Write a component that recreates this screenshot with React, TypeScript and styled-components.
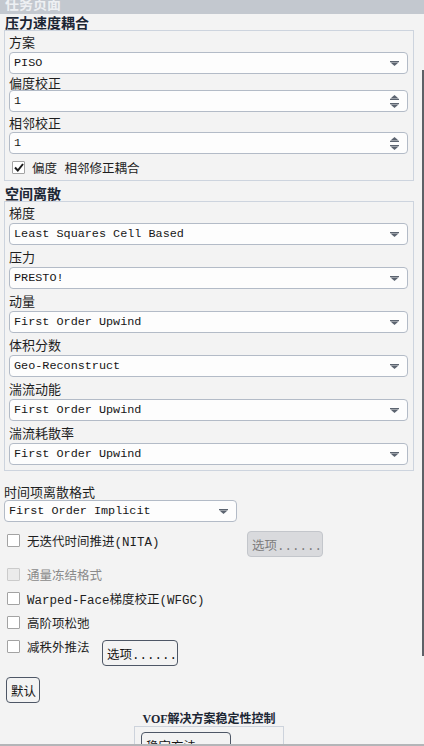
import React from 'react';
import styled, { createGlobalStyle } from 'styled-components';

const GlobalStyle = createGlobalStyle`
  html, body {
    margin: 0;
    padding: 0;
    background: #f3f3f3;
  }
  body {
    font-family: "Liberation Mono", "Noto Sans CJK SC", monospace;
    color: #1b1b1b;
  }
`;

const Panel = styled.div`
  width: 424px;
  height: 746px;
  display: flex;
  flex-direction: column;
  background: #f3f3f3;
  overflow: hidden;
`;

const TitleBar = styled.div`
  height: 14px;
  flex: none;
  background: #c3c8cf;
  overflow: hidden;
  padding-left: 5px;
`;

const TitleText = styled.div`
  margin-top: -7px;
  font-family: "Noto Sans CJK SC", sans-serif;
  font-weight: 700;
  font-size: 14px;
  line-height: 20px;
  color: #eef0f3;
`;

const Body = styled.div`
  flex: 1;
  min-height: 0;
  display: flex;
`;

const Content = styled.div`
  flex: 1;
  min-width: 0;
  padding-left: 4px;
  display: flex;
  flex-direction: column;
  overflow: hidden;

  & > * {
    flex-shrink: 0;
  }
`;

const Track = styled.div`
  width: 10px;
  flex: none;
  display: flex;
  flex-direction: column;
  align-items: flex-end;
`;

const Thumb = styled.div`
  width: 2px;
  margin-top: 56px;
  height: 586px;
  background: #5d6167;
`;

const BottomEdge = styled.div`
  height: 2px;
  flex: none;
  background: #b3b5b8;
`;

const SectionTitle = styled.div<{ $h: number }>`
  height: ${(p) => p.$h}px;
  display: flex;
  align-items: flex-end;
  padding-left: 1px;
  font-family: "Noto Sans CJK SC", sans-serif;
  font-weight: 700;
  font-size: 14px;
  line-height: 16px;
  color: #1c2634;
`;

const Group = styled.div<{ $pb?: number }>`
  border: 1px solid #cdd4de;
  padding: 0 5px ${(p) => p.$pb ?? 0}px 4px;
  display: flex;
  flex-direction: column;

  & > * {
    flex-shrink: 0;
  }
`;

const Label = styled.div<{ $h: number; $end?: boolean }>`
  height: ${(p) => p.$h}px;
  display: flex;
  align-items: ${(p) => (p.$end ? 'flex-end' : 'center')};
  padding-bottom: ${(p) => (p.$end ? 1 : 0)}px;
  box-sizing: border-box;
  font-family: "Noto Sans CJK SC", sans-serif;
  font-size: 13px;
  line-height: 15px;
  color: #1e1e1e;
`;

const Field = styled.div<{ $w?: number }>`
  height: 22px;
  box-sizing: border-box;
  width: ${(p) => (p.$w ? `${p.$w}px` : '100%')};
  border: 1px solid #b3bbc7;
  border-radius: 4px;
  background: #fdfdfd;
  display: flex;
  align-items: center;
  justify-content: space-between;
  padding: 0 8px 0 4px;
  font-family: "Liberation Mono", monospace;
  font-size: 11.8px;
  color: #161616;
`;

const ArrowBox = styled.div`
  display: flex;
  flex-direction: column;
  align-items: center;
  gap: 3px;
`;

const DropArrow = () => (
  <svg width="9" height="5" viewBox="0 0 9 5">
    <rect x="0" y="0" width="9" height="1.2" fill="#5c6470" />
    <polygon points="0.5,1.6 8.5,1.6 4.5,5" fill="#5c6470" />
  </svg>
);

const SpinArrows = () => (
  <ArrowBox>
    <svg width="9" height="5" viewBox="0 0 9 5">
      <polygon points="4.5,0 8.5,3.4 0.5,3.4" fill="#5c6470" />
      <rect x="0" y="3.8" width="9" height="1.2" fill="#5c6470" />
    </svg>
    <svg width="9" height="5" viewBox="0 0 9 5">
      <rect x="0" y="0" width="9" height="1.2" fill="#5c6470" />
      <polygon points="0.5,1.6 8.5,1.6 4.5,5" fill="#5c6470" />
    </svg>
  </ArrowBox>
);

const Select: React.FC<{ value: string; w?: number }> = ({ value, w }) => (
  <Field $w={w}>
    <span>{value}</span>
    <DropArrow />
  </Field>
);

const Spinner: React.FC<{ value: string }> = ({ value }) => (
  <Field>
    <span>{value}</span>
    <SpinArrows />
  </Field>
);

const Row = styled.div<{ $mt?: number }>`
  display: flex;
  align-items: flex-start;
  margin-top: ${(p) => p.$mt ?? 0}px;
`;

const CheckLabel = styled.div<{ $h: number; $w?: number; $disabled?: boolean }>`
  height: ${(p) => p.$h}px;
  width: ${(p) => (p.$w ? `${p.$w}px` : 'auto')};
  flex: none;
  display: flex;
  align-items: center;
  gap: 7px;
  padding-left: 3px;
  box-sizing: border-box;
  font-family: "Liberation Mono", "Noto Sans CJK SC", monospace;
  font-size: 12.5px;
  color: ${(p) => (p.$disabled ? '#8a8a8a' : '#1e1e1e')};
`;

const Box = styled.span<{ $disabled?: boolean }>`
  width: 13px;
  height: 13px;
  box-sizing: border-box;
  flex: none;
  border: 1px solid ${(p) => (p.$disabled ? '#cbcbcb' : '#a3a3a3')};
  background: ${(p) => (p.$disabled ? '#ebebeb' : '#ffffff')};
  border-radius: 1px;
  display: flex;
  align-items: center;
  justify-content: center;
`;

const Check: React.FC<{
  label: string;
  h?: number;
  w?: number;
  checked?: boolean;
  disabled?: boolean;
}> = ({ label, h = 24, w, checked, disabled }) => (
  <CheckLabel $h={h} $w={w} $disabled={disabled}>
    <Box $disabled={disabled}>
      {checked && (
        <svg width="10" height="9" viewBox="0 0 10 9">
          <path d="M1 4.5 L3.8 7.5 L9 1" fill="none" stroke="#1a1a1a" strokeWidth="2" />
        </svg>
      )}
    </Box>
    <span>{label}</span>
  </CheckLabel>
);

const Button = styled.div<{ $w: number; $disabled?: boolean; $mt?: number; $ml?: number }>`
  width: ${(p) => p.$w}px;
  height: 26px;
  box-sizing: border-box;
  flex: none;
  margin-top: ${(p) => p.$mt ?? 0}px;
  margin-left: ${(p) => p.$ml ?? 0}px;
  border: 1px solid ${(p) => (p.$disabled ? '#c3c6cb' : '#4e5766')};
  border-radius: 4px;
  background: ${(p) => (p.$disabled ? '#d9dadd' : 'transparent')};
  color: ${(p) => (p.$disabled ? '#7d7d7d' : '#151515')};
  display: flex;
  align-items: center;
  padding-left: 4px;
  font-family: "Liberation Mono", "Noto Sans CJK SC", monospace;
  font-size: 12.5px;
  white-space: nowrap;
  overflow: hidden;
`;

const VofBlock = styled.div`
  align-self: center;
  width: 150px;
  margin-top: 6px;
  display: flex;
  flex-direction: column;
`;

const VofTitle = styled.div`
  height: 17px;
  display: flex;
  align-items: center;
  justify-content: center;
  font-family: "Liberation Serif", "Noto Sans CJK SC", serif;
  font-weight: 700;
  font-size: 12px;
  color: #1c2634;
  white-space: nowrap;
`;

const VofBox = styled.div`
  border: 1px solid #cdd3dc;
  border-bottom: none;
  padding: 5px 6px 0;
  height: 40px;
`;

export default function App() {
  return (
    <>
      <GlobalStyle />
      <Panel>
        <TitleBar>
          <TitleText>任务页面</TitleText>
        </TitleBar>
        <Body>
          <Content>
            <SectionTitle $h={16}>压力速度耦合</SectionTitle>
            <Group>
              <Label $h={21}>方案</Label>
              <Select value="PISO" />
              <Label $h={16}>偏度校正</Label>
              <Spinner value="1" />
              <Label $h={20}>相邻校正</Label>
              <Spinner value="1" />
              <Check label="偏度 相邻修正耦合" h={26} checked />
            </Group>

            <SectionTitle $h={20}>空间离散</SectionTitle>
            <Group $pb={5}>
              <Label $h={21}>梯度</Label>
              <Select value="Least Squares Cell Based" />
              <Label $h={22}>压力</Label>
              <Select value="PRESTO!" />
              <Label $h={22}>动量</Label>
              <Select value="First Order Upwind" />
              <Label $h={22}>体积分数</Label>
              <Select value="Geo-Reconstruct" />
              <Label $h={22}>湍流动能</Label>
              <Select value="First Order Upwind" />
              <Label $h={22}>湍流耗散率</Label>
              <Select value="First Order Upwind" />
            </Group>

            <Label $h={29} $end>时间项离散格式</Label>
            <Select value="First Order Implicit" w={233} />

            <Row $mt={9}>
              <Check label="无迭代时间推进(NITA)" h={18} w={243} />
              <Button $w={76} $disabled>选项......</Button>
            </Row>
            <Row $mt={5}>
              <Check label="通量冻结格式" disabled />
            </Row>
            <Row>
              <Check label="Warped-Face梯度校正(WFGC)" />
            </Row>
            <Row>
              <Check label="高阶项松弛" />
            </Row>
            <Row>
              <Check label="减秩外推法" w={98} />
              <Button $w={76} $mt={6}>选项......</Button>
            </Row>
            <Row>
              <Button $w={34} $mt={11} $ml={2}>默认</Button>
            </Row>

            <VofBlock>
              <VofTitle>VOF解决方案稳定性控制</VofTitle>
              <VofBox>
                <Button $w={90}>稳定方法......</Button>
              </VofBox>
            </VofBlock>
          </Content>
          <Track>
            <Thumb />
          </Track>
        </Body>
        <BottomEdge />
      </Panel>
    </>
  );
}
